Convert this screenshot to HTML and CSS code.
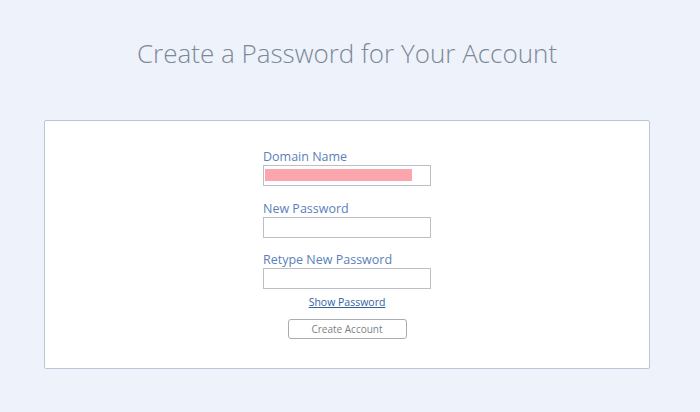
FILE: index.html
```html
<!DOCTYPE html>
<html>
<head>
<meta charset="utf-8">
<link rel="stylesheet" href="styles.css">
</head>
<body>
<h1 class="title">Create a Password for Your Account</h1>
<div class="card">
  <form class="form">
    <label class="field">
      <span class="label">Domain Name</span>
      <span class="input"><span class="redact"></span></span>
    </label>
    <label class="field">
      <span class="label">New Password</span>
      <span class="input"></span>
    </label>
    <label class="field last">
      <span class="label">Retype New Password</span>
      <span class="input"></span>
    </label>
    <a class="show" href="#">Show Password</a>
    <button class="btn" type="button">Create Account</button>
  </form>
</div>
</body>
</html>
```
FILE: styles.css
```css
html, body {
  margin: 0;
  padding: 0;
}
body {
  background: #eef2fa;
  font-family: "Open Sans", "Liberation Sans", sans-serif;
  width: 700px;
  height: 412px;
  overflow: hidden;
}
.title {
  margin: 0;
  padding-top: 36px;
  height: 120px;
  box-sizing: border-box;
  text-align: center;
  font-weight: 300;
  font-size: 26px;
  line-height: 34px;
  color: #7d8898;
  padding-right: 6px;
}
.card {
  margin-left: 44px;
  width: 606px;
  height: 249px;
  box-sizing: border-box;
  background: #ffffff;
  border: 1px solid #b9c6d8;
  border-radius: 2px;
  display: flex;
  justify-content: center;
}
.form {
  width: 168px;
  padding-top: 27px;
  display: flex;
  flex-direction: column;
}
.field {
  display: flex;
  flex-direction: column;
  margin-bottom: 13.5px;
}
.field.last {
  margin-bottom: 5px;
}
.label {
  font-size: 12.5px;
  line-height: 17px;
  color: #5a7fbb;
}
.input {
  display: block;
  height: 21px;
  box-sizing: border-box;
  border: 1px solid #bcc0c6;
  background: #fff;
  position: relative;
}
.redact {
  position: absolute;
  left: 1px;
  top: 3px;
  width: 147px;
  height: 12px;
  background: #fba5ad;
}
.show {
  align-self: center;
  font-size: 10.5px;
  line-height: 14px;
  color: #2f5f9e;
  text-decoration: underline;
  margin-top: 1px;
}
.btn {
  align-self: center;
  margin-top: 10px;
  width: 119px;
  height: 20px;
  background: #fff;
  border: 1px solid #a9adb3;
  border-radius: 3px;
  font-family: "Open Sans", "Liberation Sans", sans-serif;
  font-size: 10px;
  color: #7a7f86;
  padding: 0;
}
```
